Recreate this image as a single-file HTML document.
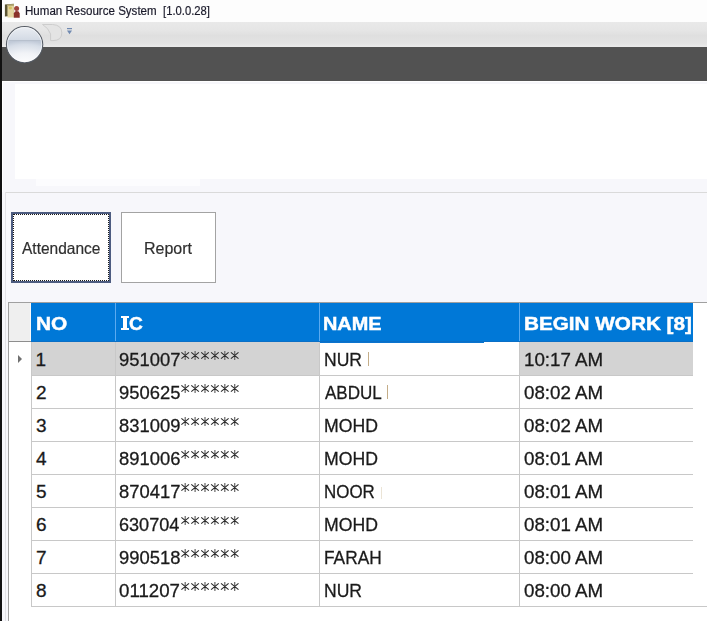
<!DOCTYPE html>
<html><head><meta charset="utf-8"><style>
*{margin:0;padding:0;box-sizing:border-box}
html,body{width:707px;height:621px;overflow:hidden;background:#f7f7fb;font-family:"Liberation Sans",sans-serif;position:relative}
div{position:absolute}
.t{line-height:20px;white-space:pre;transform-origin:0 0}
</style></head><body>
<div style="left:0;top:0;width:2px;height:621px;background:#111"></div>
<div style="left:2px;top:0;width:705px;height:22px;background:#fdfdfd"></div>
<div style="left:2px;top:22px;width:705px;height:25px;background:linear-gradient(#e9e9e9,#e5e5e5 35%,#dfdfdf 55%,#e3e3e3 85%,#ebebeb)"></div>
<div style="left:2px;top:47px;width:705px;height:34px;background:#525252"></div>
<svg style="position:absolute;left:3px;top:1px" width="20" height="20" viewBox="0 0 20 20">
<defs><filter id="bl" x="-20%" y="-20%" width="140%" height="140%"><feGaussianBlur stdDeviation="0.6"/></filter></defs>
<g filter="url(#bl)">
<path d="M1.9 3.4 L10.8 2.8 L10.8 14.8 L1.9 15.4 Z" fill="#5c5636"/>
<path d="M4.4 3.8 L10.9 3.6 L11 16.4 L4.5 16.6 Z" fill="#e4d6a2"/>
<path d="M4.4 3.8 L10.9 3.6 L10.9 5 L4.4 5.3 Z" fill="#b9ab72"/>
<ellipse cx="7.3" cy="7" rx="1.7" ry="1.4" fill="#d6c060"/>
<circle cx="13.6" cy="7.6" r="2.5" fill="#a0443e"/>
<path d="M10.8 16.8 L10.8 12.4 Q11.4 10 13.6 10 Q16.2 10 16.7 12.4 L16.7 16.8 Z" fill="#8a302c"/>
</g>
</svg>
<svg style="position:absolute;left:5px;top:25px" width="40" height="40" viewBox="0 0 40 40">
<defs>
<linearGradient id="og" x1="0" y1="0" x2="0" y2="1">
<stop offset="0" stop-color="#eef1f5"/><stop offset="1" stop-color="#d2d9e4"/>
</linearGradient>
<radialGradient id="rg" cx="0.5" cy="1.0" r="1.0">
<stop offset="0" stop-color="#ffffff"/><stop offset="0.5" stop-color="#f1f3f7"/><stop offset="0.85" stop-color="#d6dde7"/><stop offset="1" stop-color="#c1cad8"/>
</radialGradient>
<clipPath id="cc"><circle cx="19.6" cy="19.6" r="17.6"/></clipPath>
</defs>
<circle cx="19.6" cy="19.6" r="18.7" fill="#555b64"/>
<g clip-path="url(#cc)">
<rect x="0" y="0" width="40" height="15.6" fill="url(#og)"/>
<rect x="0" y="15.6" width="40" height="25" fill="url(#rg)"/>
<rect x="0" y="15.1" width="40" height="1" fill="#bcc6d4" opacity="0.7"/>
</g>
<circle cx="19.6" cy="19.6" r="17.1" fill="none" stroke="#ffffff" stroke-opacity="0.55" stroke-width="1"/>
</svg>
<svg style="position:absolute;left:40px;top:22px" width="36" height="22" viewBox="0 0 36 22">
<path d="M2.5 2.5 L12.5 2.5 Q21.8 3 21.8 10.8 Q21.8 18.6 13 18.6 L10.6 18.6 L10.6 12 Q8.5 6 2.5 2.5 Z" fill="#e4e4e4" stroke="#cdcdcd" stroke-width="1"/>
<rect x="27" y="6" width="5" height="1.2" fill="#7089b0"/>
<path d="M27 8.6 L32 8.6 L29.5 12.2 Z" fill="#7089b0"/>
</svg>
<div style="left:2px;top:81px;width:705px;height:1px;background:#fff"></div>
<div style="left:15px;top:84px;width:692px;height:95px;background:#fff"></div>
<div style="left:2px;top:81px;width:1px;height:111px;background:#fff"></div>
<div style="left:36px;top:179px;width:164px;height:7px;background:#fcfcfe"></div>
<div style="left:5px;top:192px;width:702px;height:1px;background:#dadada"></div>
<div style="left:5px;top:192px;width:1px;height:429px;background:#e2e2e6"></div>
<div style="left:11px;top:212px;width:100px;height:71px;background:#fff;border:2px solid #4d5c80"></div>
<div style="left:13px;top:214px;width:96px;height:67px;border:1px dotted #1a1a1a"></div>
<div style="left:121px;top:212px;width:95px;height:71px;background:#fff;border:1px solid #a3a3a3"></div>
<div style="left:8px;top:302px;width:699px;height:319px;background:#fff;border-left:1px solid #a0a0a0;border-top:1px solid #a0a0a0"></div>
<div style="left:9px;top:303px;width:22px;height:39px;background:#efefef"></div>
<div style="left:9px;top:341px;width:22px;height:1px;background:#8e8e8e"></div>
<div style="left:30px;top:303px;width:1px;height:38px;background:#fafafa"></div>
<div style="left:31px;top:303px;width:662px;height:39px;background:#0078d7"></div>
<div style="left:31px;top:341px;width:662px;height:1px;background:#0a6fc6"></div>
<div style="left:115px;top:303px;width:1px;height:38px;background:#5aaaf0"></div>
<div style="left:319px;top:303px;width:1px;height:38px;background:#5aaaf0"></div>
<div style="left:519px;top:303px;width:1px;height:38px;background:#5aaaf0"></div>
<div style="left:31px;top:342px;width:662px;height:33px;background:#d3d3d3"></div>
<svg style="position:absolute;left:17px;top:354px" width="6" height="10" viewBox="0 0 6 10"><path d="M1 1 L5 5 L1 9 Z" fill="#707070"/></svg>
<div style="left:31px;top:375px;width:662px;height:1px;background:#c8c8c8"></div>
<div style="left:31px;top:408px;width:662px;height:1px;background:#c8c8c8"></div>
<div style="left:31px;top:441px;width:662px;height:1px;background:#c8c8c8"></div>
<div style="left:31px;top:474px;width:662px;height:1px;background:#c8c8c8"></div>
<div style="left:31px;top:507px;width:662px;height:1px;background:#c8c8c8"></div>
<div style="left:31px;top:540px;width:662px;height:1px;background:#c8c8c8"></div>
<div style="left:31px;top:573px;width:662px;height:1px;background:#c8c8c8"></div>
<div style="left:31px;top:606px;width:662px;height:1px;background:#c8c8c8"></div>
<div style="left:31px;top:342px;width:1px;height:264px;background:#c8c8c8"></div>
<div style="left:115px;top:342px;width:1px;height:264px;background:#c8c8c8"></div>
<div style="left:319px;top:342px;width:1px;height:264px;background:#c8c8c8"></div>
<div style="left:519px;top:342px;width:1px;height:264px;background:#c8c8c8"></div>
<div style="left:31px;top:606px;width:676px;height:1px;background:#c8c8c8"></div>
<div style="left:121px;top:316px;width:8px;height:2px;background:#fff"></div>
<div style="left:123px;top:316px;width:4px;height:14px;background:#fff"></div>
<div style="left:121px;top:328px;width:8px;height:2px;background:#fff"></div>
<div style="left:320px;top:342px;width:199px;height:33px;background:#fff"></div>
<div style="left:320px;top:342px;width:164px;height:1px;background:#0a74cf"></div>
<svg style="position:absolute;left:0;top:0" width="707" height="621"><path d="M185.20 351.10V359.90M195.10 351.10V359.90M205.00 351.10V359.90M214.90 351.10V359.90M224.80 351.10V359.90M234.70 351.10V359.90" stroke="#666" stroke-width="1.2" fill="none"/><path d="M181.40 352.40L189.00 358.60M181.40 358.60L189.00 352.40M191.30 352.40L198.90 358.60M191.30 358.60L198.90 352.40M201.20 352.40L208.80 358.60M201.20 358.60L208.80 352.40M211.10 352.40L218.70 358.60M211.10 358.60L218.70 352.40M221.00 352.40L228.60 358.60M221.00 358.60L228.60 352.40M230.90 352.40L238.50 358.60M230.90 358.60L238.50 352.40" stroke="#2c2c2c" stroke-width="1.15" fill="none"/></svg>
<svg style="position:absolute;left:0;top:0" width="707" height="621"><path d="M185.20 384.10V392.90M195.10 384.10V392.90M205.00 384.10V392.90M214.90 384.10V392.90M224.80 384.10V392.90M234.70 384.10V392.90" stroke="#666" stroke-width="1.2" fill="none"/><path d="M181.40 385.40L189.00 391.60M181.40 391.60L189.00 385.40M191.30 385.40L198.90 391.60M191.30 391.60L198.90 385.40M201.20 385.40L208.80 391.60M201.20 391.60L208.80 385.40M211.10 385.40L218.70 391.60M211.10 391.60L218.70 385.40M221.00 385.40L228.60 391.60M221.00 391.60L228.60 385.40M230.90 385.40L238.50 391.60M230.90 391.60L238.50 385.40" stroke="#2c2c2c" stroke-width="1.15" fill="none"/></svg>
<svg style="position:absolute;left:0;top:0" width="707" height="621"><path d="M185.20 417.10V425.90M195.10 417.10V425.90M205.00 417.10V425.90M214.90 417.10V425.90M224.80 417.10V425.90M234.70 417.10V425.90" stroke="#666" stroke-width="1.2" fill="none"/><path d="M181.40 418.40L189.00 424.60M181.40 424.60L189.00 418.40M191.30 418.40L198.90 424.60M191.30 424.60L198.90 418.40M201.20 418.40L208.80 424.60M201.20 424.60L208.80 418.40M211.10 418.40L218.70 424.60M211.10 424.60L218.70 418.40M221.00 418.40L228.60 424.60M221.00 424.60L228.60 418.40M230.90 418.40L238.50 424.60M230.90 424.60L238.50 418.40" stroke="#2c2c2c" stroke-width="1.15" fill="none"/></svg>
<svg style="position:absolute;left:0;top:0" width="707" height="621"><path d="M185.20 450.10V458.90M195.10 450.10V458.90M205.00 450.10V458.90M214.90 450.10V458.90M224.80 450.10V458.90M234.70 450.10V458.90" stroke="#666" stroke-width="1.2" fill="none"/><path d="M181.40 451.40L189.00 457.60M181.40 457.60L189.00 451.40M191.30 451.40L198.90 457.60M191.30 457.60L198.90 451.40M201.20 451.40L208.80 457.60M201.20 457.60L208.80 451.40M211.10 451.40L218.70 457.60M211.10 457.60L218.70 451.40M221.00 451.40L228.60 457.60M221.00 457.60L228.60 451.40M230.90 451.40L238.50 457.60M230.90 457.60L238.50 451.40" stroke="#2c2c2c" stroke-width="1.15" fill="none"/></svg>
<svg style="position:absolute;left:0;top:0" width="707" height="621"><path d="M185.20 483.10V491.90M195.10 483.10V491.90M205.00 483.10V491.90M214.90 483.10V491.90M224.80 483.10V491.90M234.70 483.10V491.90" stroke="#666" stroke-width="1.2" fill="none"/><path d="M181.40 484.40L189.00 490.60M181.40 490.60L189.00 484.40M191.30 484.40L198.90 490.60M191.30 490.60L198.90 484.40M201.20 484.40L208.80 490.60M201.20 490.60L208.80 484.40M211.10 484.40L218.70 490.60M211.10 490.60L218.70 484.40M221.00 484.40L228.60 490.60M221.00 490.60L228.60 484.40M230.90 484.40L238.50 490.60M230.90 490.60L238.50 484.40" stroke="#2c2c2c" stroke-width="1.15" fill="none"/></svg>
<svg style="position:absolute;left:0;top:0" width="707" height="621"><path d="M185.20 516.10V524.90M195.10 516.10V524.90M205.00 516.10V524.90M214.90 516.10V524.90M224.80 516.10V524.90M234.70 516.10V524.90" stroke="#666" stroke-width="1.2" fill="none"/><path d="M181.40 517.40L189.00 523.60M181.40 523.60L189.00 517.40M191.30 517.40L198.90 523.60M191.30 523.60L198.90 517.40M201.20 517.40L208.80 523.60M201.20 523.60L208.80 517.40M211.10 517.40L218.70 523.60M211.10 523.60L218.70 517.40M221.00 517.40L228.60 523.60M221.00 523.60L228.60 517.40M230.90 517.40L238.50 523.60M230.90 523.60L238.50 517.40" stroke="#2c2c2c" stroke-width="1.15" fill="none"/></svg>
<svg style="position:absolute;left:0;top:0" width="707" height="621"><path d="M185.20 549.10V557.90M195.10 549.10V557.90M205.00 549.10V557.90M214.90 549.10V557.90M224.80 549.10V557.90M234.70 549.10V557.90" stroke="#666" stroke-width="1.2" fill="none"/><path d="M181.40 550.40L189.00 556.60M181.40 556.60L189.00 550.40M191.30 550.40L198.90 556.60M191.30 556.60L198.90 550.40M201.20 550.40L208.80 556.60M201.20 556.60L208.80 550.40M211.10 550.40L218.70 556.60M211.10 556.60L218.70 550.40M221.00 550.40L228.60 556.60M221.00 556.60L228.60 550.40M230.90 550.40L238.50 556.60M230.90 556.60L238.50 550.40" stroke="#2c2c2c" stroke-width="1.15" fill="none"/></svg>
<svg style="position:absolute;left:0;top:0" width="707" height="621"><path d="M185.20 582.10V590.90M195.10 582.10V590.90M205.00 582.10V590.90M214.90 582.10V590.90M224.80 582.10V590.90M234.70 582.10V590.90" stroke="#666" stroke-width="1.2" fill="none"/><path d="M181.40 583.40L189.00 589.60M181.40 589.60L189.00 583.40M191.30 583.40L198.90 589.60M191.30 589.60L198.90 583.40M201.20 583.40L208.80 589.60M201.20 589.60L208.80 583.40M211.10 583.40L218.70 589.60M211.10 589.60L218.70 583.40M221.00 583.40L228.60 589.60M221.00 589.60L228.60 583.40M230.90 583.40L238.50 589.60M230.90 589.60L238.50 583.40" stroke="#2c2c2c" stroke-width="1.15" fill="none"/></svg>
<div style="left:368px;top:352px;width:1px;height:14px;background:#c4ad88"></div>
<div style="left:387px;top:385px;width:1px;height:14px;background:#c4ad88"></div>
<div style="left:381px;top:487px;width:1px;height:12px;background:#ebe4d6"></div>
<div class="t" id="t_title" style="left:25.04px;top:1.00px;font-size:12px;color:#1b1b2b;-webkit-text-stroke:0.2px #1b1b2b;transform:scaleX(0.9630);">Human Resource System</div>
<div class="t" id="t_ver" style="left:163.06px;top:1.00px;font-size:12px;color:#1b1b2b;-webkit-text-stroke:0.2px #1b1b2b;transform:scaleX(0.9377);">[1.0.0.28]</div>
<div class="t" id="t_att" style="left:22.00px;top:237.50px;font-size:16.5px;color:#2f2f2f;-webkit-text-stroke:0.2px #2f2f2f;transform:scaleX(0.9399);">Attendance</div>
<div class="t" id="t_rep" style="left:143.84px;top:238.00px;font-size:16.5px;color:#2f2f2f;-webkit-text-stroke:0.2px #2f2f2f;transform:scaleX(0.9689);">Report</div>
<div class="t" id="h_no" style="left:35.64px;top:314.00px;font-size:19px;color:#fff;font-weight:bold;-webkit-text-stroke:0.45px #fff;transform:scaleX(1.0968);">NO</div>
<div class="t" id="h_ic" style="left:128.99px;top:314.00px;font-size:19px;color:#fff;font-weight:bold;-webkit-text-stroke:0.45px #fff;transform:scaleX(1.0070);">C</div>
<div class="t" id="h_name" style="left:323.11px;top:314.00px;font-size:19px;color:#fff;font-weight:bold;-webkit-text-stroke:0.45px #fff;transform:scaleX(1.0474);">NAME</div>
<div class="t" id="h_begin" style="left:523.87px;top:314.00px;font-size:19px;color:#fff;font-weight:bold;-webkit-text-stroke:0.45px #fff;transform:scaleX(1.0894);">BEGIN WORK [8]</div>
<div class="t" id="r0_n" style="left:35.55px;top:350.00px;font-size:19px;color:#1a1a1a;-webkit-text-stroke:0.3px #1a1a1a;transform:scaleX(1.0000);">1</div>
<div class="t" id="r0_ic" style="left:119.03px;top:350.00px;font-size:19px;color:#1a1a1a;-webkit-text-stroke:0.3px #1a1a1a;transform:scaleX(0.9679);">951007</div>
<div class="t" id="r0_nm" style="left:323.70px;top:350.00px;font-size:19px;color:#1a1a1a;-webkit-text-stroke:0.3px #1a1a1a;transform:scaleX(0.9234);">NUR</div>
<div class="t" id="r0_t" style="left:524.01px;top:350.00px;font-size:19px;color:#1a1a1a;-webkit-text-stroke:0.3px #1a1a1a;transform:scaleX(0.9872);">10:17 AM</div>
<div class="t" id="r1_n" style="left:36.05px;top:383.00px;font-size:19px;color:#1a1a1a;-webkit-text-stroke:0.3px #1a1a1a;transform:scaleX(1.0000);">2</div>
<div class="t" id="r1_ic" style="left:119.03px;top:383.00px;font-size:19px;color:#1a1a1a;-webkit-text-stroke:0.3px #1a1a1a;transform:scaleX(0.9679);">950625</div>
<div class="t" id="r1_nm" style="left:324.65px;top:383.00px;font-size:19px;color:#1a1a1a;-webkit-text-stroke:0.3px #1a1a1a;transform:scaleX(0.8969);">ABDUL</div>
<div class="t" id="r1_t" style="left:524.01px;top:383.00px;font-size:19px;color:#1a1a1a;-webkit-text-stroke:0.3px #1a1a1a;transform:scaleX(0.9872);">08:02 AM</div>
<div class="t" id="r2_n" style="left:36.05px;top:416.00px;font-size:19px;color:#1a1a1a;-webkit-text-stroke:0.3px #1a1a1a;transform:scaleX(1.0000);">3</div>
<div class="t" id="r2_ic" style="left:119.03px;top:416.00px;font-size:19px;color:#1a1a1a;-webkit-text-stroke:0.3px #1a1a1a;transform:scaleX(0.9679);">831009</div>
<div class="t" id="r2_nm" style="left:323.70px;top:416.00px;font-size:19px;color:#1a1a1a;-webkit-text-stroke:0.3px #1a1a1a;transform:scaleX(0.9286);">MOHD</div>
<div class="t" id="r2_t" style="left:524.01px;top:416.00px;font-size:19px;color:#1a1a1a;-webkit-text-stroke:0.3px #1a1a1a;transform:scaleX(0.9872);">08:02 AM</div>
<div class="t" id="r3_n" style="left:36.05px;top:449.00px;font-size:19px;color:#1a1a1a;-webkit-text-stroke:0.3px #1a1a1a;transform:scaleX(1.0000);">4</div>
<div class="t" id="r3_ic" style="left:119.03px;top:449.00px;font-size:19px;color:#1a1a1a;-webkit-text-stroke:0.3px #1a1a1a;transform:scaleX(0.9679);">891006</div>
<div class="t" id="r3_nm" style="left:323.70px;top:449.00px;font-size:19px;color:#1a1a1a;-webkit-text-stroke:0.3px #1a1a1a;transform:scaleX(0.9286);">MOHD</div>
<div class="t" id="r3_t" style="left:524.01px;top:449.00px;font-size:19px;color:#1a1a1a;-webkit-text-stroke:0.3px #1a1a1a;transform:scaleX(0.9872);">08:01 AM</div>
<div class="t" id="r4_n" style="left:36.05px;top:482.00px;font-size:19px;color:#1a1a1a;-webkit-text-stroke:0.3px #1a1a1a;transform:scaleX(1.0000);">5</div>
<div class="t" id="r4_ic" style="left:119.03px;top:482.00px;font-size:19px;color:#1a1a1a;-webkit-text-stroke:0.3px #1a1a1a;transform:scaleX(0.9679);">870417</div>
<div class="t" id="r4_nm" style="left:323.74px;top:482.00px;font-size:19px;color:#1a1a1a;-webkit-text-stroke:0.3px #1a1a1a;transform:scaleX(0.8911);">NOOR</div>
<div class="t" id="r4_t" style="left:524.01px;top:482.00px;font-size:19px;color:#1a1a1a;-webkit-text-stroke:0.3px #1a1a1a;transform:scaleX(0.9872);">08:01 AM</div>
<div class="t" id="r5_n" style="left:36.05px;top:515.00px;font-size:19px;color:#1a1a1a;-webkit-text-stroke:0.3px #1a1a1a;transform:scaleX(1.0000);">6</div>
<div class="t" id="r5_ic" style="left:119.05px;top:515.00px;font-size:19px;color:#1a1a1a;-webkit-text-stroke:0.3px #1a1a1a;transform:scaleX(0.9518);">630704</div>
<div class="t" id="r5_nm" style="left:323.70px;top:515.00px;font-size:19px;color:#1a1a1a;-webkit-text-stroke:0.3px #1a1a1a;transform:scaleX(0.9286);">MOHD</div>
<div class="t" id="r5_t" style="left:524.01px;top:515.00px;font-size:19px;color:#1a1a1a;-webkit-text-stroke:0.3px #1a1a1a;transform:scaleX(0.9872);">08:01 AM</div>
<div class="t" id="r6_n" style="left:36.05px;top:548.00px;font-size:19px;color:#1a1a1a;-webkit-text-stroke:0.3px #1a1a1a;transform:scaleX(1.0000);">7</div>
<div class="t" id="r6_ic" style="left:119.03px;top:548.00px;font-size:19px;color:#1a1a1a;-webkit-text-stroke:0.3px #1a1a1a;transform:scaleX(0.9679);">990518</div>
<div class="t" id="r6_nm" style="left:323.73px;top:548.00px;font-size:19px;color:#1a1a1a;-webkit-text-stroke:0.3px #1a1a1a;transform:scaleX(0.9100);">FARAH</div>
<div class="t" id="r6_t" style="left:524.01px;top:548.00px;font-size:19px;color:#1a1a1a;-webkit-text-stroke:0.3px #1a1a1a;transform:scaleX(0.9872);">08:00 AM</div>
<div class="t" id="r7_n" style="left:36.05px;top:581.00px;font-size:19px;color:#1a1a1a;-webkit-text-stroke:0.3px #1a1a1a;transform:scaleX(1.0000);">8</div>
<div class="t" id="r7_ic" style="left:119.02px;top:581.00px;font-size:19px;color:#1a1a1a;-webkit-text-stroke:0.3px #1a1a1a;transform:scaleX(0.9835);">011207</div>
<div class="t" id="r7_nm" style="left:323.70px;top:581.00px;font-size:19px;color:#1a1a1a;-webkit-text-stroke:0.3px #1a1a1a;transform:scaleX(0.9234);">NUR</div>
<div class="t" id="r7_t" style="left:524.01px;top:581.00px;font-size:19px;color:#1a1a1a;-webkit-text-stroke:0.3px #1a1a1a;transform:scaleX(0.9872);">08:00 AM</div>
</body></html>
